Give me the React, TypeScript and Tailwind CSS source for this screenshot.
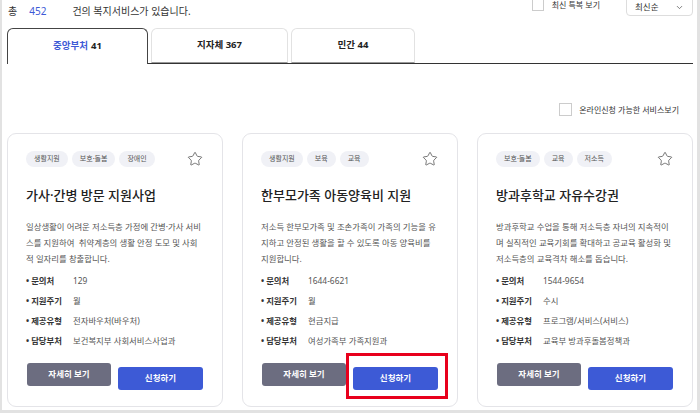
import { Star, ChevronDown } from "lucide-react";

const font = { fontFamily: '"Noto Sans", "Noto Sans CJK KR", sans-serif' };

const cards = [
  {
    tags: ["생활지원", "보호·돌봄", "장애인"],
    title: "가사·간병 방문 지원사업",
    desc: [
      "일상생활이 어려운 저소득층 가정에 간병·가사 서비",
      "스를 지원하여  취약계층의 생활 안정 도모 및 사회",
      "적 일자리를 창출합니다.",
    ],
    info: [
      ["문의처", "129"],
      ["지원주기", "월"],
      ["제공유형", "전자바우처(바우처)"],
      ["담당부처", "보건복지부 사회서비스사업과"],
    ],
  },
  {
    tags: ["생활지원", "보육", "교육"],
    title: "한부모가족 아동양육비 지원",
    desc: [
      "저소득 한부모가족 및 조손가족이 가족의 기능을 유",
      "지하고 안정된 생활을 할 수 있도록 아동 양육비를",
      "지원합니다.",
    ],
    info: [
      ["문의처", "1644-6621"],
      ["지원주기", "월"],
      ["제공유형", "현금지급"],
      ["담당부처", "여성가족부 가족지원과"],
    ],
    highlight: true,
  },
  {
    tags: ["보호·돌봄", "교육", "저소득"],
    title: "방과후학교 자유수강권",
    desc: [
      "방과후학교 수업을 통해 저소득층 자녀의 지속적이",
      "며 실직적인 교육기회를 확대하고 공교육 활성화 및",
      "저소득층의 교육격차 해소를 돕습니다.",
    ],
    info: [
      ["문의처", "1544-9654"],
      ["지원주기", "수시"],
      ["제공유형", "프로그램/서비스(서비스)"],
      ["담당부처", "교육부 방과후돌봄정책과"],
    ],
  },
];

function Card({ c }: { c: (typeof cards)[number] }) {
  return (
    <div className="flex h-[274px] flex-col rounded-[9px] border border-[#e4e4e8] px-[18px] pt-[17px]">
      <div className="flex items-center justify-between">
        <div className="flex gap-[4px]">
          {c.tags.map((t) => (
            <span
              key={t}
              className="flex h-[16px] items-center rounded-full bg-[#f0f1f6] px-[8px] text-[7px] text-[#555]"
            >
              {t}
            </span>
          ))}
        </div>
        <Star className="mr-[1px] h-[16px] w-[16px] text-[#555]" strokeWidth={1.2} />
      </div>
      <div className="mt-[19px] text-[13px] font-medium leading-[18px] text-[#222]">
        {c.title}
      </div>
      <div className="mt-[15px] text-[8.4px] leading-[16px] text-[#555]">
        {c.desc.map((l) => (
          <div key={l} className="whitespace-pre">
            {l}
          </div>
        ))}
      </div>
      <div className="mt-[4px] flex flex-col">
        {c.info.map(([k, v]) => (
          <div key={k} className="flex h-[20px] items-center text-[8.4px]">
            <span className="w-[47px] font-bold text-[#333]">
              <span className="mr-[2px]">•</span>
              {k}
            </span>
            <span className="text-[#555]">{v}</span>
          </div>
        ))}
      </div>
      <div className="mt-[12px] flex gap-[7px] px-[1px]">
        <button className="h-[23px] w-[85px] rounded-[3px] bg-[#6c6d80] text-[8.5px] font-bold text-white">
          자세히 보기
        </button>
        <div className="relative">
          <button className="h-[23px] w-[85px] rounded-[3px] bg-[#3d5ad6] text-[8.5px] font-bold text-white">
            신청하기
          </button>
          {c.highlight && (
            <div className="absolute -bottom-[9px] -left-[7px] -right-[10px] -top-[10px] border-[3px] border-[#e8001c]" />
          )}
        </div>
      </div>
    </div>
  );
}

export default function App() {
  return (
    <div
      style={font}
      className="h-[413px] w-[700px] overflow-hidden border-b-[3px] border-l-2 border-r-[3px] border-[#e2e2e2] bg-white"
    >
      {/* Header */}
      <div className="flex h-[22px] items-center pl-[6px] pr-[4px] text-[10px] text-[#333]">
        <span>총</span>
        <span className="ml-[12px] text-[#3d5ad6]">452</span>
        <span className="ml-[26px]">건의 복지서비스가 있습니다.</span>
        <div className="-mt-[12px] ml-auto flex items-start">
          <div className="mt-[5px] flex items-center">
            <span className="h-[12px] w-[12px] border border-[#ccc]" />
            <span className="ml-[8px] text-[8px]">최신 특복 보기</span>
          </div>
          <div className="ml-[26px] flex h-[22px] w-[67px] items-center justify-between rounded-[4px] border border-[#ddd] pl-[8px] pr-[8px] pt-[4px] text-[8.5px]">
            최신순
            <ChevronDown className="h-[9px] w-[9px] text-[#555]" />
          </div>
        </div>
      </div>

      {/* Tabs */}
      <div className="mt-[6px] px-[5px] pr-[4px]">
        <div className="flex h-[36px] items-end gap-[3px] border-b border-[#333]">
          <div className="-mb-px flex h-[36px] w-[141px] items-center justify-center rounded-t-[6px] border border-b-0 border-[#444] bg-white text-[9.5px] font-bold">
            <span className="text-[#3d5ad6]">중앙부처</span>
            <span className="ml-[3px] text-[#222]">41</span>
          </div>
          <div className="flex h-[35px] w-[137px] items-center justify-center rounded-t-[6px] border border-b-[#999] border-[#e2e2e2] text-[9.5px] font-bold text-[#222]">
            지자체 367
          </div>
          <div className="flex h-[35px] w-[124px] items-center justify-center rounded-t-[6px] border border-b-[#999] border-[#e2e2e2] text-[9.5px] font-bold text-[#222]">
            민간 44
          </div>
        </div>
      </div>

      {/* Online filter */}
      <div className="mt-[39px] flex items-center justify-end pr-[18px]">
        <span className="h-[13px] w-[13px] border border-[#ccc]" />
        <span className="ml-[7px] text-[8px] text-[#333]">온라인신청 가능한 서비스보기</span>
      </div>

      {/* Cards */}
      <div className="mt-[17px] grid grid-cols-3 gap-[19px] px-[5px] pr-[4px]">
        {cards.map((c) => (
          <Card key={c.title} c={c} />
        ))}
      </div>
    </div>
  );
}
